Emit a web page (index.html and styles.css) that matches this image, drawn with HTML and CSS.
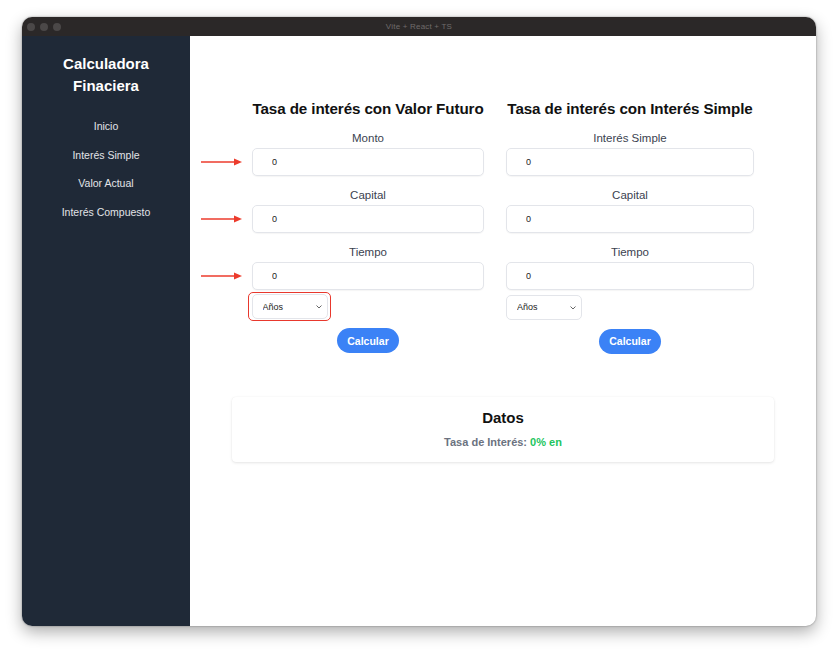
FILE: index.html
```html
<!DOCTYPE html>
<html lang="es">
<head>
<meta charset="utf-8">
<title>Vite + React + TS</title>
<link rel="stylesheet" href="styles.css">
</head>
<body>
<div class="window">
  <div class="titlebar">
    <div class="dots"><span class="dot"></span><span class="dot"></span><span class="dot"></span></div>
    <div class="title">Vite + React + TS</div>
  </div>
  <div class="app">
    <aside class="sidebar">
      <h1 class="brand">Calculadora<br>Finaciera</h1>
      <nav class="nav">
        <a class="nav-link">Inicio</a>
        <a class="nav-link">Interés Simple</a>
        <a class="nav-link">Valor Actual</a>
        <a class="nav-link">Interés Compuesto</a>
      </nav>
    </aside>
    <main class="main">
      <div class="forms">
        <section class="form form-left">
          <h2 class="form-title">Tasa de interés con Valor Futuro</h2>
          <div class="field">
            <label class="label">Monto</label>
            <div class="input-wrap">
              <svg class="arrow" width="42" height="10" viewBox="0 0 42 10"><line x1="0" y1="5" x2="34" y2="5" stroke="#ec3b2c" stroke-width="1.4"/><path d="M33 1.5 L41 5 L33 8.5 Z" fill="#ec3b2c"/></svg>
              <input class="input" type="text" value="0">
            </div>
          </div>
          <div class="field">
            <label class="label">Capital</label>
            <div class="input-wrap">
              <svg class="arrow" width="42" height="10" viewBox="0 0 42 10"><line x1="0" y1="5" x2="34" y2="5" stroke="#ec3b2c" stroke-width="1.4"/><path d="M33 1.5 L41 5 L33 8.5 Z" fill="#ec3b2c"/></svg>
              <input class="input" type="text" value="0">
            </div>
          </div>
          <div class="field field-last">
            <label class="label">Tiempo</label>
            <div class="input-wrap">
              <svg class="arrow" width="42" height="10" viewBox="0 0 42 10"><line x1="0" y1="5" x2="34" y2="5" stroke="#ec3b2c" stroke-width="1.4"/><path d="M33 1.5 L41 5 L33 8.5 Z" fill="#ec3b2c"/></svg>
              <input class="input" type="text" value="0">
            </div>
          </div>
          <div class="highlight">
            <div class="select-wrap">
              <select class="select"><option>Años</option></select>
              <svg class="chev" width="6" height="4" viewBox="0 0 6 4"><path d="M0.5 0.5 L3 3 L5.5 0.5" fill="none" stroke="#555" stroke-width="0.9"/></svg>
            </div>
          </div>
          <button class="btn">Calcular</button>
        </section>
        <section class="form form-right">
          <h2 class="form-title">Tasa de interés con Interés Simple</h2>
          <div class="field">
            <label class="label">Interés Simple</label>
            <div class="input-wrap"><input class="input" type="text" value="0"></div>
          </div>
          <div class="field">
            <label class="label">Capital</label>
            <div class="input-wrap"><input class="input" type="text" value="0"></div>
          </div>
          <div class="field field-last">
            <label class="label">Tiempo</label>
            <div class="input-wrap"><input class="input" type="text" value="0"></div>
          </div>
          <div class="plain-select">
            <div class="select-wrap">
              <select class="select"><option>Años</option></select>
              <svg class="chev" width="6" height="4" viewBox="0 0 6 4"><path d="M0.5 0.5 L3 3 L5.5 0.5" fill="none" stroke="#555" stroke-width="0.9"/></svg>
            </div>
          </div>
          <button class="btn">Calcular</button>
        </section>
      </div>
      <div class="card">
        <h3 class="card-title">Datos</h3>
        <p class="card-text">Tasa de Interés: <span class="green">0% en</span></p>
      </div>
    </main>
  </div>
</div>
</body>
</html>
```
FILE: styles.css
```css
* { box-sizing: border-box; }
html, body { margin: 0; padding: 0; background: #ffffff; }
body {
  font-family: "Liberation Sans", Arial, sans-serif;
  width: 840px;
  height: 654px;
  overflow: hidden;
}
.window {
  margin: 17px 0 0 22px;
  width: 794px;
  height: 609px;
  border-radius: 10px;
  overflow: hidden;
  box-shadow: 0 6px 16px rgba(0,0,0,0.32), 0 0 2px rgba(0,0,0,0.4);
  display: flex;
  flex-direction: column;
  background: #fff;
}
.titlebar {
  height: 19px;
  background: #2b2828;
  display: flex;
  align-items: center;
  position: relative;
  flex: none;
}
.dots { display: flex; gap: 5px; padding-left: 5px; }
.dot { width: 8px; height: 8px; border-radius: 50%; background: #4b4848; }
.title {
  position: absolute;
  left: 0; right: 0; top: 0;
  line-height: 19px;
  text-align: center;
  color: #6f6b6b;
  font-size: 8px;
  letter-spacing: 0.2px;
}
.app { flex: 1; display: flex; }
.sidebar {
  width: 168px;
  flex: none;
  background: #1f2937;
  padding-top: 17px;
  text-align: center;
}
.brand {
  margin: 0;
  color: #ffffff;
  font-size: 15px;
  line-height: 22px;
  font-weight: 700;
}
.nav {
  display: flex;
  flex-direction: column;
  align-items: center;
  gap: 14.7px;
  margin-top: 22px;
}
.nav-link {
  color: #e2e4e8;
  font-size: 10.5px;
  line-height: 14px;
}
.main {
  flex: 1;
  padding: 62px 42px 0;
  display: flex;
  flex-direction: column;
  align-items: center;
}
.forms { display: flex; gap: 22px; justify-content: center; }
.form { display: flex; flex-direction: column; align-items: center; }
.form-left { width: 232px; }
.form-right { width: 248px; }
.form-title {
  margin: 0 0 9px;
  font-size: 15.2px;
  line-height: 22px;
  font-weight: 700;
  color: #111111;
  white-space: nowrap;
  letter-spacing: -0.1px;
}
.field { width: 100%; display: flex; flex-direction: column; align-items: center; margin-bottom: 10px; }
.field-last { margin-bottom: 4px; }
.label {
  font-size: 11.5px;
  line-height: 19px;
  color: #3b4250;
}
.input-wrap { position: relative; width: 100%; }
.arrow { position: absolute; left: -51px; top: 9px; }
.input {
  display: block;
  width: 100%;
  height: 28px;
  border: 1px solid #e3e5ea;
  border-radius: 5px;
  padding: 0 0 0 19px;
  font-family: "Liberation Sans", Arial, sans-serif;
  font-size: 9px;
  color: #222;
  background: #fff;
  box-shadow: 0 1px 1px rgba(0,0,0,0.04);
  outline: none;
}
.highlight {
  align-self: flex-start;
  margin-left: -4px;
  margin-top: -2px;
  border: 1.5px solid #e8382d;
  border-radius: 5px;
  padding: 1px 2px 1px 2.5px;
}
.plain-select { align-self: flex-start; margin-top: 0.5px; }
.select-wrap { position: relative; }
.select {
  appearance: none;
  -webkit-appearance: none;
  display: block;
  height: 25px;
  border: 1px solid #e3e5ea;
  border-radius: 5px;
  background: #fff;
  padding: 0 0 0 10px;
  font-family: "Liberation Sans", Arial, sans-serif;
  font-size: 9px;
  color: #222;
  outline: none;
}
.highlight .select { width: 76px; }
.plain-select .select { width: 76px; }
.chev { position: absolute; right: 6px; top: 11px; }
.btn {
  margin-top: 9px;
  width: 62px;
  height: 25px;
  border: none;
  border-radius: 13px;
  background: #3b82f6;
  color: #ffffff;
  font-family: "Liberation Sans", Arial, sans-serif;
  font-weight: 700;
  font-size: 10.5px;
  padding: 0;
}
.highlight + .btn { margin-top: 7px; }
.card {
  margin-top: 43px;
  width: 542px;
  height: 65px;
  border-radius: 4px;
  box-shadow: 0 1px 3px rgba(0,0,0,0.1), 0 0 1px rgba(0,0,0,0.08);
  text-align: center;
  padding-top: 10px;
}
.card-title {
  margin: 0;
  font-size: 15px;
  line-height: 21px;
  font-weight: 700;
  color: #111;
}
.card-text {
  margin: 6px 0 0;
  font-size: 11px;
  line-height: 16px;
  font-weight: 700;
  color: #6b7280;
}
.green { color: #22c55e; }
```
